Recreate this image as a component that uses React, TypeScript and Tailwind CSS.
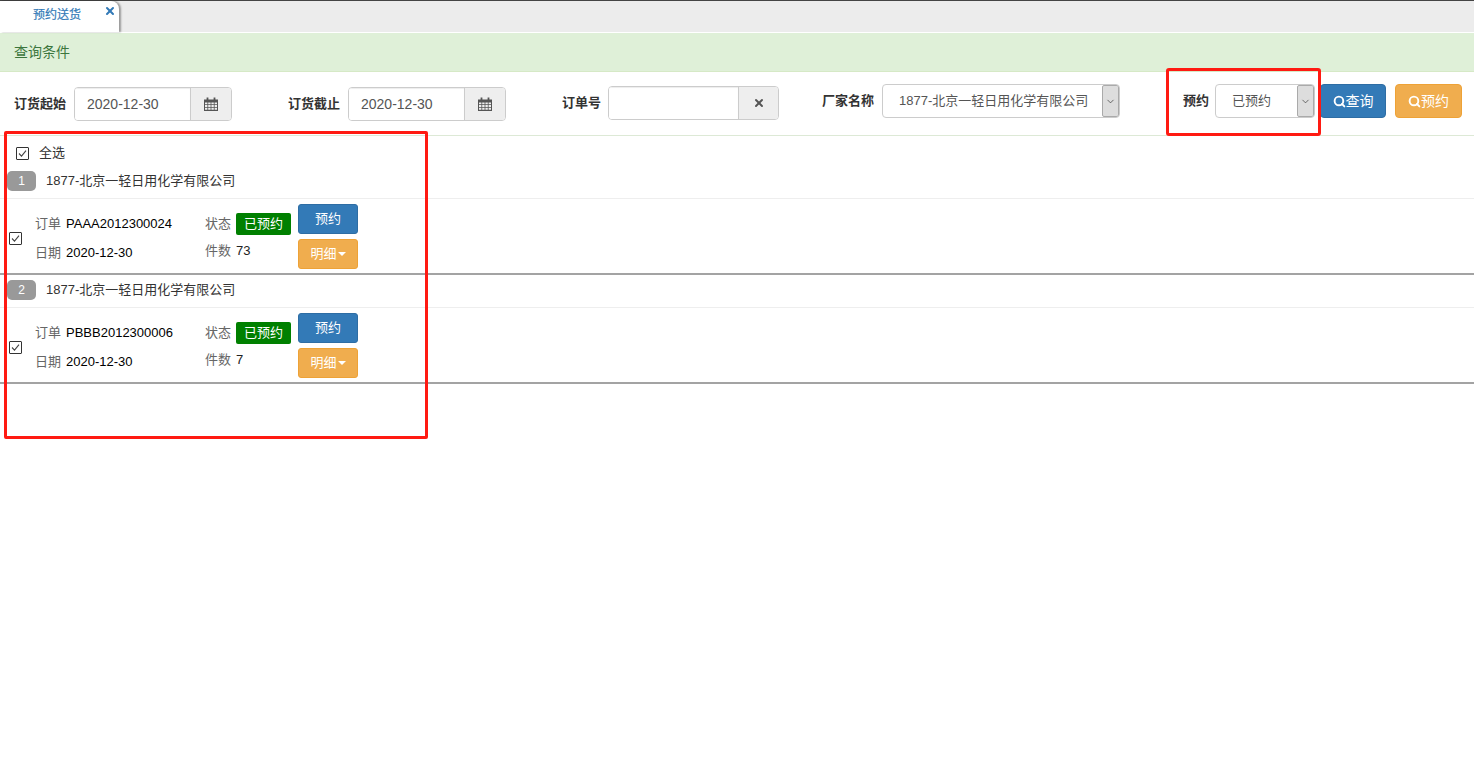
import { Calendar, Search, X, ChevronDown } from "lucide-react";

const font = { fontFamily: '"Liberation Sans", "Noto Sans CJK SC", sans-serif' };

function CalendarIcon() {
  return (
    <svg width="14" height="14" viewBox="0 0 14 14" className="text-[#555]">
      <path fill="currentColor" d="M0 2.5h14V14H0z" />
      <path fill="#eee" d="M1 5.5h2.4v1.8H1zM4.2 5.5h2.4v1.8H4.2zM7.4 5.5h2.4v1.8H7.4zM10.6 5.5H13v1.8h-2.4zM1 8.1h2.4v1.8H1zM4.2 8.1h2.4v1.8H4.2zM7.4 8.1h2.4v1.8H7.4zM10.6 8.1H13v1.8h-2.4zM1 10.7h2.4v2.1H1zM4.2 10.7h2.4v2.1H4.2zM7.4 10.7h2.4v2.1H7.4zM10.6 10.7H13v2.1h-2.4z" />
      <path fill="currentColor" d="M2.6 0.5h1.8v3.4H2.6zM9.6 0.5h1.8v3.4H9.6z" />
    </svg>
  );
}

function DateField({ value, labelW, label, ml }: { value: string; labelW: string; label: string; ml: string }) {
  return (
    <div className={`flex items-center mt-[15px] ${ml}`}>
      <span className={`${labelW} text-[13px] font-bold text-[#333] whitespace-nowrap`}>{label}</span>
      <div className="flex h-[34px] w-[158px] ml-1 rounded border border-[#ccc] overflow-hidden">
        <div className="flex-1 bg-white pl-3 flex items-center text-sm text-[#555] shadow-[inset_0_1px_1px_rgba(0,0,0,0.075)]">{value}</div>
        <div className="w-[41px] bg-[#eee] border-l border-[#ccc] flex items-center justify-center"><CalendarIcon /></div>
      </div>
    </div>
  );
}

function SelectArrow({ w }: { w: string }) {
  return (
    <div className={`${w} bg-[#ddd] border border-[#aaa] rounded-[2px] flex items-center justify-center self-stretch`}>
      <ChevronDown size={11} strokeWidth={1.5} className="text-[#333]" />
    </div>
  );
}

function OrderGroup({ n, order, count, mt }: { n: number; order: string; count: number; mt: string }) {
  return (
    <div className={mt}>
      <div className="h-[33px] flex items-center pl-[7px] border-b border-[#eee] pb-[2px]">
        <span className="w-[29px] h-5 rounded-[5px] bg-[#999] text-white text-xs flex items-center justify-center">{n}</span>
        <span className="ml-[10px] text-[13px] text-[#333]">1877-北京一轻日用化学有限公司</span>
      </div>
      <div className="h-[76px] flex border-b-2 border-[#a3a3a3] relative">
        <div className="w-[35px] pl-[9px] pt-[33px]">
          <Checkbox />
        </div>
        <div className="w-[170px] pt-[16px] text-[13px] leading-[18px]">
          <div className="h-[18px] whitespace-nowrap"><span className="text-[#666]">订单</span><span className="ml-[5px] text-black">{order}</span></div>
          <div className="h-[18px] mt-[11px] whitespace-nowrap"><span className="text-[#666]">日期</span><span className="ml-[5px] text-black">2020-12-30</span></div>
        </div>
        <div className="w-[93px] pt-[14px] text-[13px] leading-[18px]">
          <div className="flex items-center h-[22px] whitespace-nowrap">
            <span className="text-[#666]">状态</span>
            <span className="ml-[5px] w-[55px] h-[22px] rounded-[2px] bg-[#008000] text-white flex items-center justify-center">已预约</span>
          </div>
          <div className="mt-[7px] h-[18px] whitespace-nowrap"><span className="text-[#666]">件数</span><span className="ml-[5px] text-[#222]">{count}</span></div>
        </div>
        <div className="pt-[5px] flex flex-col gap-[5px]">
          <div className="w-[60px] h-[30px] rounded-[3px] bg-[#337ab7] border border-[#2e6da4] text-white text-[13px] flex items-center justify-center">预约</div>
          <div className="w-[60px] h-[30px] rounded-[3px] bg-[#f0ad4e] border border-[#eea236] text-white text-[13px] flex items-center justify-center">
            明细<span className="ml-[1px] w-0 h-0 border-x-[4px] border-x-transparent border-t-[4px] border-t-white" />
          </div>
        </div>
      </div>
    </div>
  );
}

function Checkbox() {
  return (
    <span className="block w-[13px] h-[13px] border border-[#333] rounded-[1px] bg-white">
      <svg width="11" height="11" viewBox="0 0 11 11"><path d="M2 5.5l2.5 2.6L9 2.6" fill="none" stroke="#444" strokeWidth="1.1" /></svg>
    </span>
  );
}

export default function App() {
  return (
    <div className="relative min-h-[765px] bg-white" style={font}>
      <div className="h-[33px] bg-[#ececec] border-t border-[#444] border-b border-b-white flex">
        <div className="relative w-[119px] h-[31px] bg-white rounded-tr-[8px] shadow-[2px_0_2px_rgba(0,0,0,0.35)] pl-[33px] pt-[6px] text-xs font-normal text-[#337ab7]">
          <span className="[-webkit-text-stroke:0.2px_#337ab7]">预约送货</span>
          <X size={12} strokeWidth={4} className="absolute right-[3px] top-[4px] text-[#337ab7]" />
        </div>
      </div>
      <div className="h-[39px] bg-[#dff0d8] border-b border-[#d6e9c6] pl-[14px] flex items-center text-sm text-[#3c763d]">查询条件</div>

      <div className="h-[64px] border-b border-[#dde9d6] flex items-start pl-[14px]">
        <DateField label="订货起始" labelW="w-[56px]" value="2020-12-30" ml="" />
        <DateField label="订货截止" labelW="w-[56px]" value="2020-12-30" ml="ml-[56px]" />

        <div className="flex items-center mt-[14px] ml-[56px]">
          <span className="w-[42px] text-[13px] font-bold text-[#333]">订单号</span>
          <div className="flex h-[34px] w-[171px] ml-1 rounded border border-[#ccc] overflow-hidden">
            <div className="flex-1 bg-white shadow-[inset_0_1px_1px_rgba(0,0,0,0.075)]" />
            <div className="w-[40px] bg-[#eee] border-l border-[#ccc] flex items-center justify-center">
              <X size={12} strokeWidth={4} className="text-[#555]" />
            </div>
          </div>
        </div>

        <div className="flex items-center mt-[12px] ml-[43px]">
          <span className="w-[56px] text-[13px] font-bold text-[#333]">厂家名称</span>
          <div className="flex h-[34px] w-[238px] ml-1 rounded border border-[#ccc] overflow-hidden bg-white">
            <div className="flex-1 pl-4 flex items-center text-[13px] text-[#555] whitespace-nowrap overflow-hidden">1877-北京一轻日用化学有限公司</div>
            <SelectArrow w="w-[17px]" />
          </div>
        </div>

        <div className="flex items-center mt-[12px] ml-[63px]">
          <span className="w-[28px] text-[13px] font-bold text-[#333]">预约</span>
          <div className="flex h-[34px] w-[100px] ml-1 rounded border border-[#ccc] overflow-hidden bg-white">
            <div className="flex-1 pl-4 flex items-center text-[13px] text-[#555]">已预约</div>
            <SelectArrow w="w-[17px]" />
          </div>
        </div>

        <div className="mt-[12px] ml-[5px] w-[66px] h-[34px] rounded bg-[#337ab7] border border-[#2e6da4] text-white text-sm flex items-center justify-center">
          <Search size={13} strokeWidth={3.5} />查询
        </div>
        <div className="mt-[12px] ml-[9px] w-[67px] h-[34px] rounded bg-[#f0ad4e] border border-[#eea236] text-white text-sm flex items-center justify-center">
          <Search size={13} strokeWidth={3.5} />预约
        </div>
      </div>

      <div className="flex items-center h-[24px] mt-[5px] pl-4 text-[13px] text-[#333]">
        <Checkbox />
        <span className="ml-[10px]">全选</span>
      </div>
      <OrderGroup n={1} order="PAAA2012300024" count={73} mt="mt-[1px]" />
      <OrderGroup n={2} order="PBBB2012300006" count={7} mt="" />

      <div className="absolute left-[4px] top-[131px] w-[424px] h-[308px] border-[3px] border-[#ff1a12] rounded-[2px] pointer-events-none" />
      <div className="absolute left-[1166px] top-[68px] w-[155px] h-[68px] border-[3px] border-[#ff1a12] rounded-[3px] pointer-events-none" />
    </div>
  );
}
